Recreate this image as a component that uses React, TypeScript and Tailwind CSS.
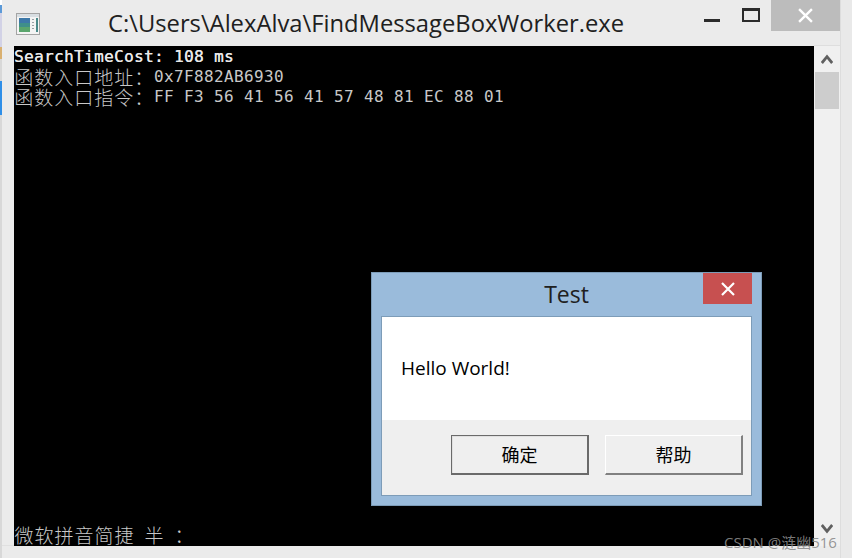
import React from "react";

const mono = "font-['DejaVu_Sans_Mono','Liberation_Mono',monospace]";
const cjk = "font-['Noto_Sans_CJK_SC','DejaVu_Sans',sans-serif]";
const ui = "font-['Open_Sans','Noto_Sans_CJK_SC',sans-serif]";

function Cn({ children }: { children: string }) {
  return (
    <>
      {Array.from(children).map((c, i) => (
        <span key={i} className={`block w-5 h-5 shrink-0 text-center text-[19px] leading-5 font-light ${cjk}`}>
          {c}
        </span>
      ))}
    </>
  );
}

function Line({ children, bold }: { children: React.ReactNode; bold?: boolean }) {
  return (
    <div className={`flex items-center h-5 leading-5 whitespace-pre text-[16px] tracking-[0.37px] ${mono} ${bold ? "text-[#e8e8e8] [text-shadow:0.25px_0_0_#e8e8e8]" : "text-[#c8c8c8]"}`}>
      {children}
    </div>
  );
}

function AppIcon() {
  return (
    <svg width="24" height="22" viewBox="0 0 24 22" className="shrink-0">
      <rect x="0.5" y="0.5" width="23" height="21" fill="#f4f4f4" stroke="#a4a4a4" />
      <rect x="1" y="1" width="22" height="3" fill="#d8dee2" />
      <rect x="3" y="5" width="11" height="14" fill="#3f8f8a" />
      <rect x="3" y="5" width="11" height="5" fill="#3d78a8" />
      <rect x="3" y="14" width="11" height="5" fill="#5aa56c" />
      <rect x="16" y="6" width="2" height="1" fill="#9aa0a4" />
      <rect x="16" y="9" width="2" height="1" fill="#9aa0a4" />
      <rect x="16" y="12" width="2" height="1" fill="#9aa0a4" />
      <rect x="16" y="15" width="2" height="1" fill="#9aa0a4" />
      <rect x="20" y="5" width="2" height="14" fill="#4a8a8a" />
    </svg>
  );
}

function Chevron({ down }: { down?: boolean }) {
  return (
    <svg width="12" height="10" viewBox="0 0 12 10" className={down ? "rotate-180" : ""}>
      <path d="M0.8 9 L6 2.6 L11.2 9" fill="none" stroke="#606060" strokeWidth="2.8" />
    </svg>
  );
}

function Cross({ size }: { size: number }) {
  return (
    <svg width={size} height={size} viewBox="0 0 14 14">
      <path d="M1 1 L13 13 M13 1 L1 13" stroke="#ffffff" strokeWidth="2.2" fill="none" />
    </svg>
  );
}

function DlgButton({ label, dark }: { label: string; dark?: boolean }) {
  return (
    <div
      className={`w-[138px] h-10 flex items-center justify-center pb-[1px] text-[18px] text-black bg-[#efefef] border border-b-2 border-r-2 ${cjk} ${
        dark
          ? "border-t-[#6a6a6a] border-l-[#6a6a6a] border-r-[#6a6a6a] border-b-[#6a6a6a] shadow-[inset_1px_1px_0_#e0e0e0]"
          : "border-t-white border-l-white border-r-[#808080] border-b-[#808080]"
      }`}
    >
      {label}
    </div>
  );
}

export default function App() {
  return (
    <div className="relative w-[852px] h-[558px] overflow-hidden bg-[#e9e9e9] flex">
      {/* desktop sliver on the left */}
      <div className="w-[2px] flex flex-col bg-[#dcdcdc]">
        <div className="h-[5px] bg-white" />
        <div className="h-[8px] bg-[#5c9ad8]" />
        <div className="h-[34px] bg-[#d2d2e6]" />
        <div className="h-[12px] bg-[#d9b070]" />
        <div className="h-[22px] bg-[#d8d8d8]" />
        <div className="h-[34px] bg-[#2f8fe8]" />
        <div className="flex-1 bg-[#d8d8d8]" />
      </div>

      <div className="w-[839px] flex flex-col bg-[#ebebeb] border-r border-[#dddddd]">
        {/* title bar */}
        <div className="relative h-[45px] flex items-start shrink-0">
          <div className="ml-[14px] mt-[13px]">
            <AppIcon />
          </div>
          <div className={`ml-[68px] mt-[7px] text-[23.75px] leading-[32px] whitespace-pre text-[#202020] ${ui}`}>
            C:\Users\AlexAlva\FindMessageBoxWorker.exe
          </div>
          <div className="ml-auto flex items-start">
            <div className="w-4 h-[3px] mt-[19px] bg-[#2b2b2b]" />
            <div className="ml-[22px] mt-[8px] w-[18px] h-[14px] border-2 border-t-[3px] border-[#2b2b2b]" />
            <div className="ml-[11px] w-[69px] h-[31px] bg-[#bcbcbc] flex items-center justify-center">
              <Cross size={15} />
            </div>
          </div>
        </div>

        {/* client area */}
        <div className="h-[501px] flex pl-[12px] border-b border-[#e0e0e0] shrink-0">
          <div className="w-[800px] h-[500px] mt-[1px] bg-black flex flex-col pt-[1px]">
            <Line bold>SearchTimeCost: 108 ms</Line>
            <Line>
              <Cn>函数入口地址：</Cn>0x7F882AB6930
            </Line>
            <Line>
              <Cn>函数入口指令：</Cn>FF F3 56 41 56 41 57 48 81 EC 88 01
            </Line>
            <div className="mt-auto mb-[1px] flex h-5 text-[#c8c8c8]">
              <Cn>微软拼音简捷</Cn>
              <span className="block w-[10px]" />
              <Cn>半</Cn>
              <span className="block w-[10px]" />
              <Cn>：</Cn>
            </div>
          </div>
          <div className="w-[26px] h-[501px] bg-[#f0f0f0] flex flex-col items-center border-t border-[#dedede]">
            <div className="h-[26px] flex items-center justify-center shrink-0">
              <Chevron />
            </div>
            <div className="w-6 h-[37px] bg-[#cdcdcd]" />
            <div className="mt-auto h-[26px] pb-[8px] flex items-center justify-center">
              <Chevron down />
            </div>
          </div>
        </div>
      </div>

      {/* message box */}
      <div className="absolute left-[371px] top-[272px] w-[391px] h-[234px] bg-[#9abbdb] border border-[#7d9cb8] flex flex-col">
        <div className="relative h-[43px] shrink-0">
          <div className={`absolute left-0 right-0 top-[5px] text-center text-[23px] leading-[33px] text-[#202020] ${ui}`}>Test</div>
          <div className="absolute right-[9px] top-0 w-[49px] h-[31px] bg-[#c75050] flex items-center justify-center">
            <Cross size={14} />
          </div>
        </div>
        <div className="mx-[9px] w-[371px] h-[180px] border border-[#7d9cb8] flex flex-col">
          <div className={`h-[103px] bg-white pl-[19px] pt-[38px] text-[19px] leading-[26px] text-black ${ui}`}>Hello World!</div>
          <div className="flex-1 bg-[#efefef] flex justify-end items-start gap-4 pt-[15px] pr-[8px]">
            <DlgButton label="确定" dark />
            <DlgButton label="帮助" />
          </div>
        </div>
      </div>

      {/* watermark */}
      <div className={`absolute left-[724px] top-[532px] text-[15px] leading-5 whitespace-pre text-[#8a8a8a]/90 ${ui}`}>
        CSDN @涟幽516
      </div>
    </div>
  );
}
